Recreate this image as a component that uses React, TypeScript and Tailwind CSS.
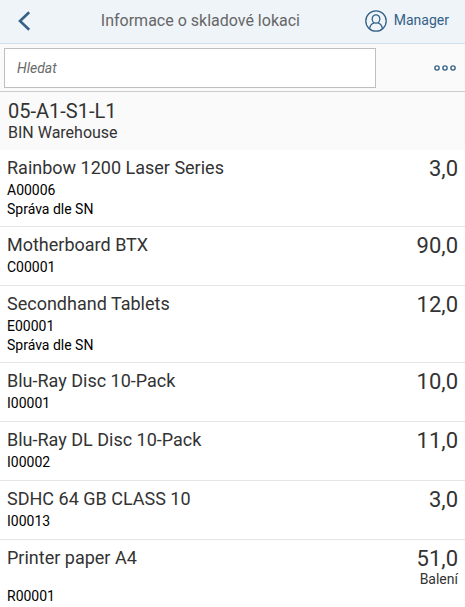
import { useState } from "react";

interface StockItem {
  name: string;
  code: string;
  quantity: string;
  unit?: string;
  note?: string;
}

const ITEMS: StockItem[] = [
  { name: "Rainbow 1200 Laser Series", code: "A00006", quantity: "3,0", note: "Správa dle SN" },
  { name: "Motherboard BTX", code: "C00001", quantity: "90,0" },
  { name: "Secondhand Tablets", code: "E00001", quantity: "12,0", note: "Správa dle SN" },
  { name: "Blu-Ray Disc 10-Pack", code: "I00001", quantity: "10,0" },
  { name: "Blu-Ray DL Disc 10-Pack", code: "I00002", quantity: "11,0" },
  { name: "SDHC 64 GB CLASS 10", code: "I00013", quantity: "3,0" },
  { name: "Printer paper A4", code: "R00001", quantity: "51,0", unit: "Balení" },
];

function StockRow({ item }: { item: StockItem }) {
  return (
    <li className="border-b border-[#e5e5e5] px-[7px] pt-[7px] pb-2">
      <div className="flex items-start justify-between gap-4">
        <h2 className="text-[18px] leading-[22px] text-[#333333]">{item.name}</h2>
        <div className="shrink-0 text-right text-[#333333]">
          <div className="text-[22px] leading-[24px]">{item.quantity}</div>
          {item.unit && <div className="text-[14px] leading-4">{item.unit}</div>}
        </div>
      </div>
      <p className="text-[14px] leading-[19px] text-black">{item.code}</p>
      {item.note && <p className="text-[14px] leading-[18px] text-black">{item.note}</p>}
    </li>
  );
}

export default function App() {
  const [query, setQuery] = useState("");
  const needle = query.trim().toLowerCase();
  const visible = ITEMS.filter(i => `${i.name} ${i.code}`.toLowerCase().includes(needle));

  return (
    <div className="min-h-screen bg-white font-[Roboto,sans-serif]">
      {/* Shell bar */}
      <header className="flex h-11 items-center border-b border-[#cfe0ee] bg-[#eff4f9] pr-4 pb-0.5 pl-4">
        <button aria-label="Zpět" className="flex w-20 text-[#346187]">
          <svg className="h-5 w-4" viewBox="0 0 16 20" fill="none" stroke="currentColor" strokeWidth={2.6}>
            <path d="M13.2 1.2 4 10l9.2 8.8" />
          </svg>
        </button>
        <h1 className="flex-1 text-center text-[16px] leading-5 text-[#666666]">Informace o skladové lokaci</h1>
        <button className="ml-15 flex items-center gap-[7px] text-[14px] text-[#346187]">
          <svg className="h-[22px] w-[22px]" viewBox="0 0 22 22" fill="none" stroke="currentColor" strokeWidth={1.3}>
            <circle cx="11" cy="11" r="10.2" />
            <ellipse cx="11" cy="9" rx="3.8" ry="4.2" />
            <path d="M4.6 18.8c.3-3.2 1.8-5.1 4.4-6M17.4 18.8c-.3-3.2-1.8-5.1-4.4-6" />
          </svg>
          Manager
        </button>
      </header>

      {/* Search toolbar */}
      <div className="flex h-12 items-center border-b border-[#cccccc] bg-[#fafafa] px-1">
        <input
          type="text"
          aria-label="Hledat"
          placeholder="Hledat"
          value={query}
          onChange={e => setQuery(e.target.value)}
          className="h-10 min-w-0 flex-1 border border-[#bfbfbf] bg-white px-3 text-[14px] text-[#333333] outline-none placeholder:text-[#6a6a6a] placeholder:italic"
        />
        <button aria-label="Další" className="ml-[57px] pr-1 text-[#346187]">
          <svg className="h-2 w-6" viewBox="0 0 24 8" fill="none" stroke="currentColor" strokeWidth={1.4}>
            <circle cx="4" cy="4" r="2.1" />
            <circle cx="12" cy="4" r="2.1" />
            <circle cx="20" cy="4" r="2.1" />
          </svg>
        </button>
      </div>

      {/* Location */}
      <section className="bg-[#fafafa] px-2 pt-[7px] pb-2 text-[#333333]">
        <div className="text-[20px] leading-6">05-A1-S1-L1</div>
        <div className="text-[16px] leading-[19px]">BIN Warehouse</div>
      </section>

      <ul>
        {visible.map(item => <StockRow key={item.code} item={item} />)}
      </ul>
    </div>
  );
}
